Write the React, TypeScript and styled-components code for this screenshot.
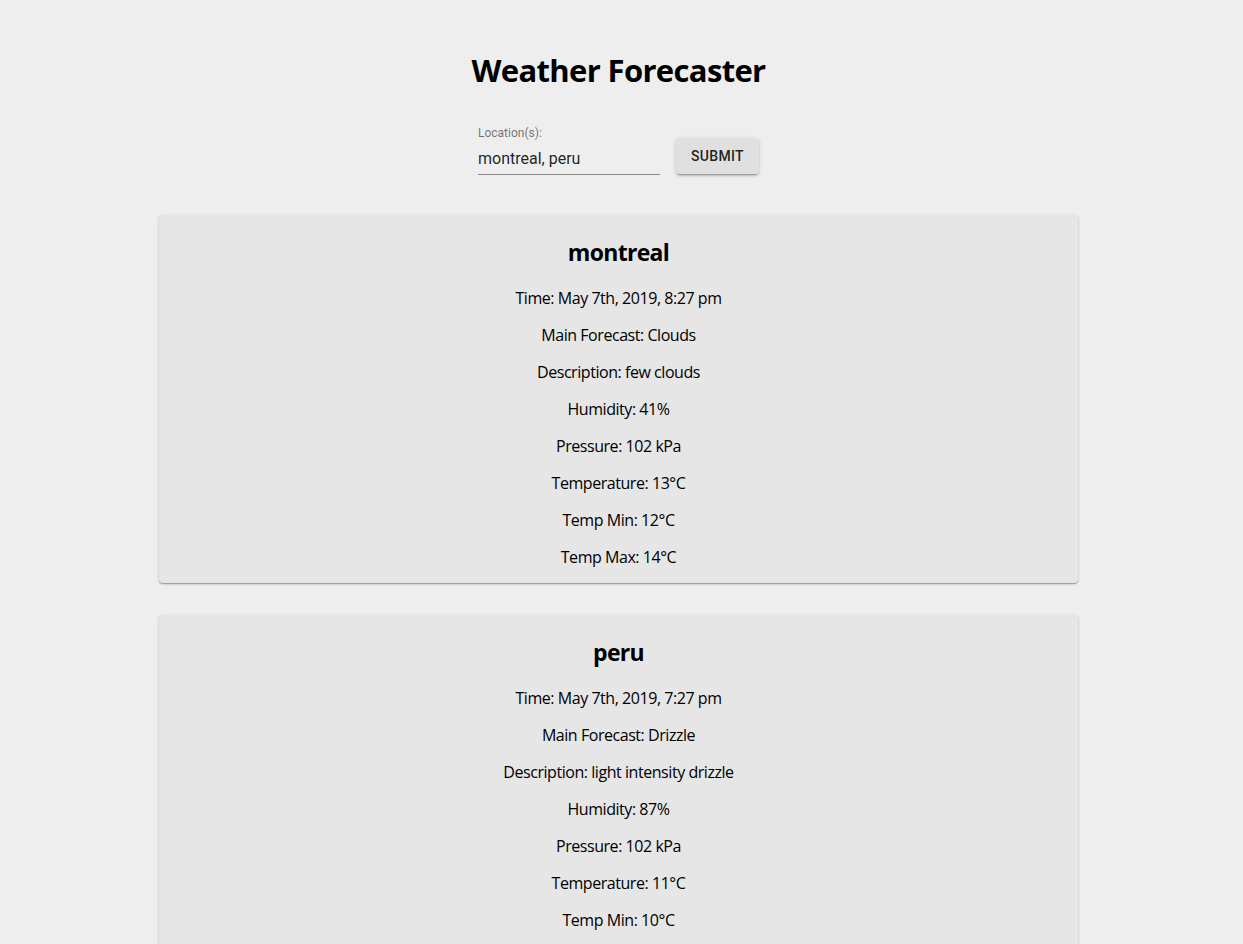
import React from "react";
import styled, { createGlobalStyle } from "styled-components";

const Global = createGlobalStyle`
  html, body { margin: 0; padding: 0; background: #eeeeee; }
  body { font-family: "Open Sans", "Noto Sans", sans-serif; color: #000; }
  ::-webkit-scrollbar { display: none; }
`;

const Page = styled.div`
  display: flex;
  flex-direction: column;
  align-items: center;
  padding: 49px 0 0 0;
  width: 1237px;
`;

const Title = styled.h1`
  margin: 0;
  font-size: 31px;
  line-height: 42px;
  font-weight: 700;
  letter-spacing: -0.65px;
`;

const Form = styled.form`
  display: flex;
  align-items: flex-end;
  gap: 16px;
  margin-top: 35px;
`;

const Field = styled.div`
  display: flex;
  flex-direction: column;
  width: 182px;
  font-family: Roboto, sans-serif;
`;

const Label = styled.label`
  font-size: 12px;
  line-height: 14px;
  color: rgba(0, 0, 0, 0.54);
  height: 16px;
`;

const Input = styled.input`
  font-family: Roboto, sans-serif;
  font-size: 16px;
  line-height: 19px;
  height: 19px;
  padding: 7px 0 6px;
  border: 0;
  border-bottom: 1px solid rgba(0, 0, 0, 0.42);
  background: transparent;
  color: rgba(0, 0, 0, 0.87);
  outline: none;
  width: 100%;
`;

const Button = styled.button`
  font-family: Roboto, sans-serif;
  font-weight: 500;
  font-size: 14px;
  letter-spacing: 0.3px;
  text-transform: uppercase;
  height: 36px;
  width: 83px;
  padding: 0;
  border: 0;
  border-radius: 4px;
  background: #e0e0e0;
  color: rgba(0, 0, 0, 0.87);
  box-shadow: 0px 3px 1px -2px rgba(0, 0, 0, 0.2), 0px 2px 2px 0px rgba(0, 0, 0, 0.14),
    0px 1px 5px 0px rgba(0, 0, 0, 0.12);
  margin-bottom: 1px;
  cursor: pointer;
`;

const Cards = styled.div`
  display: flex;
  flex-direction: column;
  gap: 32px;
  margin-top: 40px;
  width: 919px;
`;

const Card = styled.section`
  display: flex;
  flex-direction: column;
  align-items: center;
  background: #e6e6e6;
  border-radius: 4px;
  box-shadow: 0px 1px 3px 0px rgba(0, 0, 0, 0.2), 0px 1px 1px 0px rgba(0, 0, 0, 0.14),
    0px 2px 1px -1px rgba(0, 0, 0, 0.12);
  padding: 22px 0 15px;
`;

const CityName = styled.h2`
  margin: 0 0 20px;
  font-size: 23px;
  line-height: 31px;
  font-weight: 700;
  letter-spacing: -0.7px;
`;

const Line = styled.p`
  margin: 0 0 16px;
  font-size: 16px;
  line-height: 21px;
  letter-spacing: -0.45px;
  &:last-child { margin-bottom: 0; }
`;

const data = [
  {
    name: "montreal",
    lines: [
      "Time: May 7th, 2019, 8:27 pm",
      "Main Forecast: Clouds",
      "Description: few clouds",
      "Humidity: 41%",
      "Pressure: 102 kPa",
      "Temperature: 13°C",
      "Temp Min: 12°C",
      "Temp Max: 14°C",
    ],
  },
  {
    name: "peru",
    lines: [
      "Time: May 7th, 2019, 7:27 pm",
      "Main Forecast: Drizzle",
      "Description: light intensity drizzle",
      "Humidity: 87%",
      "Pressure: 102 kPa",
      "Temperature: 11°C",
      "Temp Min: 10°C",
      "Temp Max: 12°C",
    ],
  },
];

export default function App() {
  return (
    <>
      <Global />
      <Page>
        <Title>Weather Forecaster</Title>
        <Form onSubmit={(e) => e.preventDefault()}>
          <Field>
            <Label htmlFor="loc">Location(s):</Label>
            <Input id="loc" defaultValue="montreal, peru" />
          </Field>
          <Button type="submit">Submit</Button>
        </Form>
        <Cards>
          {data.map((c) => (
            <Card key={c.name}>
              <CityName>{c.name}</CityName>
              {c.lines.map((l) => (
                <Line key={l}>{l}</Line>
              ))}
            </Card>
          ))}
        </Cards>
      </Page>
    </>
  );
}
